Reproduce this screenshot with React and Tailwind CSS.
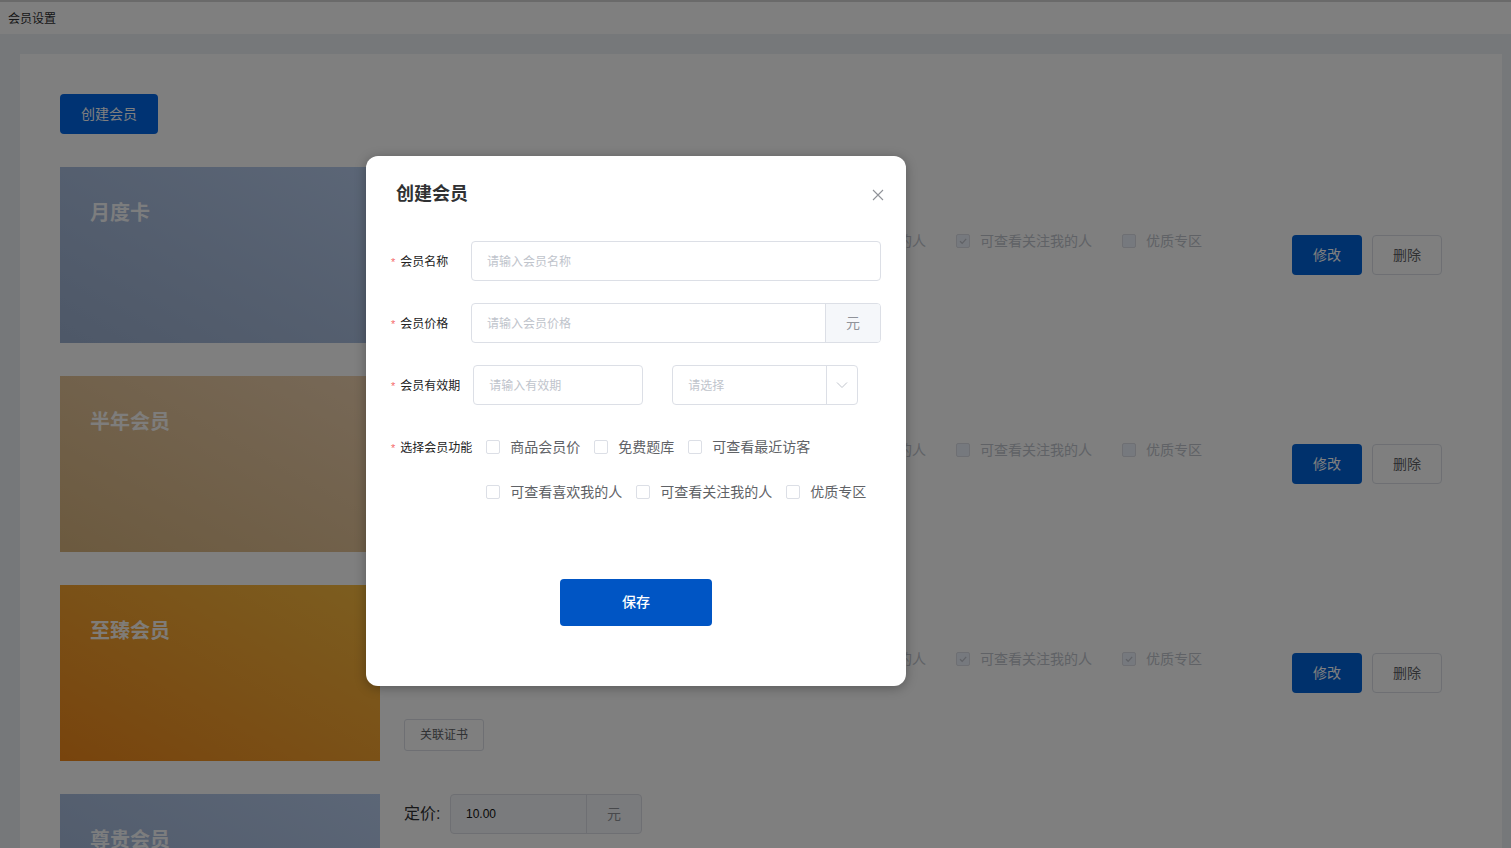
import React from "react";

const FEATURES = ["商品会员价", "免费题库", "可查看最近访客", "可查看喜欢我的人", "可查看关注我的人", "优质专区"];

const ROWS = [
  { name: "月度卡", bg: "bg-linear-to-tr from-[#9cb0d0] to-[#b8cdee]", price: "10.00", checked: [true, true, false, false, true, false] },
  { name: "半年会员", bg: "bg-linear-to-tr from-[#d8b47e] to-[#efd2b0]", price: "50.00", checked: [true, false, true, false, false, false] },
  { name: "至臻会员", bg: "bg-linear-to-tr from-[#f0881a] to-[#f9bc40]", price: "100.00", checked: [true, true, true, true, true, true] },
  { name: "尊贵会员", bg: "bg-linear-to-tr from-[#9cb0d0] to-[#b8cdee]", price: "10.00", checked: [true, false, false, false, false, false] },
];

function CheckMark({ color }) {
  return (
    <svg width="10" height="10" viewBox="0 0 10 10" fill="none">
      <path d="M2 5.2 L4.2 7.3 L8.2 2.8" stroke={color} strokeWidth="1.2" />
    </svg>
  );
}

function DisabledCheck({ checked, label }) {
  return (
    <div className="flex items-center mr-[30px]">
      <span className="w-[14px] h-[14px] rounded-[2px] border border-[#dcdfe6] bg-[#edf2fc] flex items-center justify-center">
        {checked && <CheckMark color="#c0c4cc" />}
      </span>
      <span className="pl-[10px] text-[14px] leading-[20px] text-[#c0c4cc]">{label}</span>
    </div>
  );
}

function ModalCheck({ label }) {
  return (
    <div className="flex items-center mr-[14px]">
      <span className="w-[14px] h-[14px] rounded-[2px] border border-[#dcdfe6] bg-white" />
      <span className="pl-[10px] text-[14px] leading-[20px] text-[#606266]">{label}</span>
    </div>
  );
}

function Label({ children, extra = "" }) {
  return (
    <div className={`flex-none min-w-[80px] h-[40px] flex items-center pt-[2px] text-[12px] leading-[16px] text-[#222] ${extra}`}>
      <span className="text-[#f56c6c] mr-[5px] text-[11px]">*</span>
      <span>{children}</span>
    </div>
  );
}

function Row({ row }) {
  return (
    <div className="flex h-[176px]">
      <div className={`w-[320px] h-[176px] flex-none ${row.bg} pl-[30px] pt-[33px]`}>
        <div className="text-[20px] leading-[26px] font-bold text-white/95">{row.name}</div>
      </div>
      <div className="flex-1 ml-[24px] flex flex-col">
        <div className="flex items-center h-[40px]">
          <span className="text-[16px] text-[#303133] w-[46px]">定价:</span>
          <div className="flex w-[192px] h-[40px] border border-[#dcdfe6] rounded-[4px] bg-[#f5f7fa] overflow-hidden">
            <div className="flex-1 flex items-center pl-[15px] text-[12px] text-[#111]">{row.price}</div>
            <div className="w-[55px] border-l border-[#dcdfe6] flex items-center justify-center text-[14px] text-[#909399]">元</div>
          </div>
        </div>
        <div className="flex items-center mt-[24px] h-[20px]">
          {FEATURES.map((f, i) => (
            <DisabledCheck key={f} label={f} checked={row.checked[i]} />
          ))}
        </div>
        <div className="mt-[50px]">
          <button className="w-[80px] h-[32px] border border-[#dcdfe6] rounded-[3px] bg-white text-[12px] text-[#606266]">关联证书</button>
        </div>
      </div>
      <div className="flex items-center gap-[10px]">
        <button className="w-[70px] h-[40px] rounded-[4px] bg-[#0062d8] text-white text-[14px]">修改</button>
        <button className="w-[70px] h-[40px] rounded-[4px] border border-[#dcdfe6] bg-white text-[#606266] text-[14px]">删除</button>
      </div>
    </div>
  );
}

export default function App() {
  return (
    <div className="relative w-[1511px] h-[848px] overflow-hidden bg-[#ecf0f5] font-['Liberation_Sans','Noto_Sans_CJK_SC',sans-serif]">
      <div className="h-[34px] bg-white border-t-2 border-[#d4d4d4] flex items-center pl-[8px] pt-[2px] text-[12px] text-[#303133]">会员设置</div>
      <div className="pt-[20px] pl-[20px] pr-[9px] h-[814px]">
        <div className="bg-white h-full overflow-hidden pl-[40px] pr-[60px] pt-[40px]">
          <button className="w-[98px] h-[40px] rounded-[4px] bg-[#0066e6] text-white text-[14px]">创建会员</button>
          <div className="mt-[33px] flex flex-col gap-[33px]">
            {ROWS.map((r) => (
              <Row key={r.name} row={r} />
            ))}
          </div>
        </div>
      </div>

      {/* overlay */}
      <div className="absolute inset-0 bg-[rgba(0,0,0,0.5)]" />

      {/* modal */}
      <div className="absolute left-[366px] top-[156px] w-[540px] h-[530px] rounded-[12px] bg-white shadow-[0_2px_12px_rgba(0,0,0,0.3)]">
        <div className="flex items-center justify-between pl-[30px] pr-[22px] pt-[26px] h-[50px]">
          <span className="text-[18px] leading-[24px] font-bold text-[#303133]">创建会员</span>
          <svg width="12" height="12" viewBox="0 0 12 12" className="mt-[2px]">
            <path d="M1 1 L11 11 M11 1 L1 11" stroke="#909399" strokeWidth="1.1" />
          </svg>
        </div>
        <div className="pl-[25px] pr-[25px] mt-[35px] flex flex-col gap-[22px]">
          <div className="flex h-[40px]">
            <Label>会员名称</Label>
            <div className="flex-1 h-[40px] border border-[#dcdfe6] rounded-[4px] flex items-center pl-[15px] pt-[2px] text-[12px] text-[#c0c4cc]">请输入会员名称</div>
          </div>
          <div className="flex h-[40px]">
            <Label>会员价格</Label>
            <div className="flex-1 h-[40px] border border-[#dcdfe6] rounded-[4px] flex overflow-hidden">
              <div className="flex-1 flex items-center pl-[15px] pt-[2px] text-[12px] text-[#c0c4cc]">请输入会员价格</div>
              <div className="w-[55px] bg-[#f5f7fa] border-l border-[#dcdfe6] flex items-center justify-center text-[14px] text-[#909399]">元</div>
            </div>
          </div>
          <div className="flex h-[40px]">
            <Label extra="pr-[13px]">会员有效期</Label>
            <div className="w-[170px] h-[40px] border border-[#dcdfe6] rounded-[4px] flex items-center pl-[15px] pt-[2px] text-[12px] text-[#c0c4cc]">请输入有效期</div>
            <div className="ml-[29px] w-[186px] h-[40px] border border-[#dcdfe6] rounded-[4px] flex">
              <div className="flex-1 flex items-center pl-[15px] pt-[2px] text-[12px] text-[#c0c4cc]">请选择</div>
              <div className="w-[31px] border-l border-[#dcdfe6] flex items-center justify-center">
                <svg width="12" height="8" viewBox="0 0 12 8">
                  <path d="M1 1.5 L6 6.5 L11 1.5" stroke="#c0c4cc" strokeWidth="1" fill="none" />
                </svg>
              </div>
            </div>
          </div>
          <div className="flex">
            <Label extra="pr-[14px]">选择会员功能</Label>
            <div className="flex flex-col gap-[5px]">
              <div className="flex items-center h-[40px]">
                <ModalCheck label="商品会员价" />
                <ModalCheck label="免费题库" />
                <ModalCheck label="可查看最近访客" />
              </div>
              <div className="flex items-center h-[40px]">
                <ModalCheck label="可查看喜欢我的人" />
                <ModalCheck label="可查看关注我的人" />
                <ModalCheck label="优质专区" />
              </div>
            </div>
          </div>
        </div>
        <div className="flex justify-center mt-[67px]">
          <button className="w-[152px] h-[47px] rounded-[4px] bg-[#0055c4] text-white text-[14px] font-medium">保存</button>
        </div>
      </div>
    </div>
  );
}
